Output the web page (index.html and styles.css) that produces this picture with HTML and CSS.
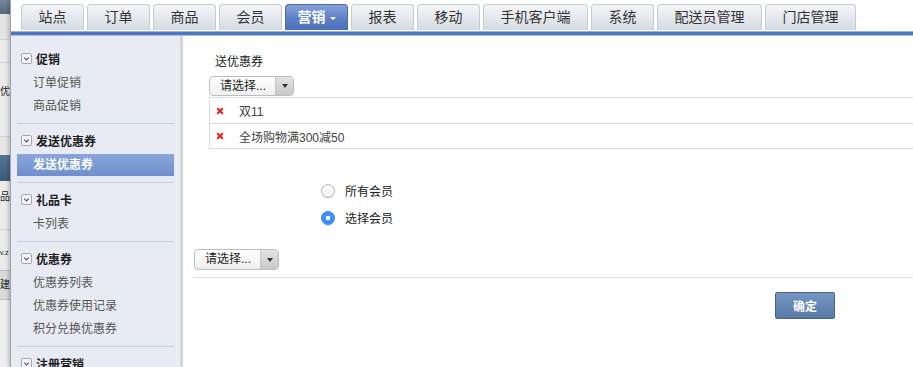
FILE: index.html
```html
<!DOCTYPE html>
<html>
    <head>
        <title>营销 - 发送优惠券</title>
        <link rel="stylesheet" href="styles.css">
    </head>
    <body>
        <div class="desk">
            <div class="desk-title"></div>
            <div class="desk-row r1"></div>
            <div class="desk-row r2"></div>
            <div class="desk-row r3">优</div>
            <div class="desk-row r4"></div>
            <div class="desk-bar"></div>
            <div class="desk-row r5">品</div>
            <div class="desk-row r6">v.z</div>
            <div class="desk-row r7">建</div>
            <div class="desk-rest"></div>
        </div>

        <div class="app">
            <div class="tabbar">
                <div class="tab">站点</div>
                <div class="tab">订单</div>
                <div class="tab">商品</div>
                <div class="tab">会员</div>
                <div class="tab active">营销<span class="caret"></span></div>
                <div class="tab">报表</div>
                <div class="tab">移动</div>
                <div class="tab">手机客户端</div>
                <div class="tab">系统</div>
                <div class="tab">配送员管理</div>
                <div class="tab">门店管理</div>
            </div>
            <div class="band"></div>

            <div class="workspace">
                <div class="sidebar">
                    <div class="group">
                        <div class="head"><svg class="chk" width="11" height="11" viewBox="0 0 11 11"><rect x="0.5" y="0.5" width="10" height="10" rx="1.5" fill="#f4f5f8" stroke="#a3a9b3"/><path d="M3.2 4.6 L5.5 6.9 L7.8 4.6" fill="none" stroke="#50565e" stroke-width="1.1"/></svg>促销</div>
                        <div class="item">订单促销</div>
                        <div class="item">商品促销</div>
                    </div>
                    <div class="group">
                        <div class="head"><svg class="chk" width="11" height="11" viewBox="0 0 11 11"><rect x="0.5" y="0.5" width="10" height="10" rx="1.5" fill="#f4f5f8" stroke="#a3a9b3"/><path d="M3.2 4.6 L5.5 6.9 L7.8 4.6" fill="none" stroke="#50565e" stroke-width="1.1"/></svg>发送优惠券</div>
                        <div class="item current">发送优惠券</div>
                    </div>
                    <div class="group">
                        <div class="head"><svg class="chk" width="11" height="11" viewBox="0 0 11 11"><rect x="0.5" y="0.5" width="10" height="10" rx="1.5" fill="#f4f5f8" stroke="#a3a9b3"/><path d="M3.2 4.6 L5.5 6.9 L7.8 4.6" fill="none" stroke="#50565e" stroke-width="1.1"/></svg>礼品卡</div>
                        <div class="item">卡列表</div>
                    </div>
                    <div class="group">
                        <div class="head"><svg class="chk" width="11" height="11" viewBox="0 0 11 11"><rect x="0.5" y="0.5" width="10" height="10" rx="1.5" fill="#f4f5f8" stroke="#a3a9b3"/><path d="M3.2 4.6 L5.5 6.9 L7.8 4.6" fill="none" stroke="#50565e" stroke-width="1.1"/></svg>优惠券</div>
                        <div class="item">优惠券列表</div>
                        <div class="item">优惠券使用记录</div>
                        <div class="item">积分兑换优惠券</div>
                    </div>
                    <div class="group">
                        <div class="head"><svg class="chk" width="11" height="11" viewBox="0 0 11 11"><rect x="0.5" y="0.5" width="10" height="10" rx="1.5" fill="#f4f5f8" stroke="#a3a9b3"/><path d="M3.2 4.6 L5.5 6.9 L7.8 4.6" fill="none" stroke="#50565e" stroke-width="1.1"/></svg>注册营销</div>
                    </div>
                </div>

                <div class="main">
                    <div class="coupon">
                        <div class="label">送优惠券</div>
                        <div class="select"><span class="sel-text">请选择...</span><span class="sel-arrow"><i></i></span></div>
                        <div class="list">
                            <div class="row"><svg class="del" width="8" height="8" viewBox="0 0 8 8"><path d="M1.2 1.2 L6.8 6.8 M6.8 1.2 L1.2 6.8" stroke="#e2231a" stroke-width="2"/></svg><span>双11</span></div>
                            <div class="row"><svg class="del" width="8" height="8" viewBox="0 0 8 8"><path d="M1.2 1.2 L6.8 6.8 M6.8 1.2 L1.2 6.8" stroke="#e2231a" stroke-width="2"/></svg><span>全场购物满300减50</span></div>
                        </div>
                    </div>

                    <div class="members">
                        <div class="opt"><span class="radio"></span>所有会员</div>
                        <div class="opt"><span class="radio on"></span>选择会员</div>
                    </div>

                    <div class="picker">
                        <div class="select tall"><span class="sel-text">请选择...</span><span class="sel-arrow"><i></i></span></div>
                    </div>
                    <div class="rule"></div>
                    <div class="actions">
                        <button class="btn">确定</button>
                    </div>
                </div>
            </div>
        </div>
    </body>
</html>
```

FILE: styles.css
```css
*{
    box-sizing:border-box;
}
body{
    margin:0;
    height:367px;
    overflow:hidden;
    display:flex;
    background:#fff;
    font-family:"Liberation Sans","Noto Sans CJK SC",sans-serif;
    font-size:12px;
    color:#333;
}

/* window behind, left edge */
.desk{
    width:10px;
    flex:none;
    display:flex;
    flex-direction:column;
    overflow:hidden;
    background:#e9e9e9;
    color:#222;
    font-size:10px;
    white-space:nowrap;
}
.desk-title{
    height:14px;
    background:linear-gradient(#75879b,#56687c);
}
.desk-row{
    border-bottom:1px solid #d0d0d0;
    line-height:16px;
}
.r1{height:26px;background:#e4e4e4;}
.r2{height:23px;background:#ececec;}
.r3{height:74px;padding-top:21px;background:#ebebeb;}
.r4{height:18px;background:#e6e6e6;border-bottom:none;}
.desk-bar{
    height:26px;
    background:linear-gradient(#557593,#3b5b7c);
}
.r5{height:49px;padding-top:8px;background:#ececec;}
.r6{height:40px;padding-top:15px;font-size:7px;background:#ebebeb;border-bottom:none;}
.r7{height:30px;line-height:28px;background:#d9d9d9;border-top:1px solid #bdbdbd;border-bottom:1px solid #bdbdbd;}
.desk-rest{
    flex:1;
    background:#eeeeee;
}

.app{
    flex:1;
    min-width:0;
    display:flex;
    flex-direction:column;
    border-left:1px solid #9ea4ab;
    box-shadow:-2px 0 3px rgba(0,0,0,.18);
}

/* top tabs */
.tabbar{
    height:31px;
    padding:4px 0 0 10px;
    display:flex;
    gap:3px;
    white-space:nowrap;
}
.tab{
    height:26px;
    padding:0 16.5px;
    border:1px solid #c6cbd3;
    border-bottom:none;
    border-radius:4px 4px 0 0;
    background:linear-gradient(#f4f5f8,#e4e7ed 55%,#d5dae2);
    font-size:14px;
    line-height:25px;
    color:#333;
}
.tab.active{
    padding:0 11.5px;
    border-color:#4d6db0;
    background:linear-gradient(#86a2da,#5d80c6 55%,#4b6fb9);
    color:#fff;
    font-weight:bold;
}
.caret{
    display:inline-block;
    margin-left:4px;
    vertical-align:middle;
    border-left:3px solid transparent;
    border-right:3px solid transparent;
    border-top:3px solid #fff;
}
.band{
    height:5px;
    flex:none;
    background:linear-gradient(#9cb2de 0 1px,#5176c1 1px 4px,#aabde3 4px);
}

.workspace{
    flex:1;
    display:flex;
    min-height:0;
}

/* left menu */
.sidebar{
    width:172px;
    flex:none;
    padding-top:6px;
    background:#e8ebf3;
    border-right:3px solid #d3d5da;
    overflow:hidden;
}
.group{
    margin:0 6px;
    padding:5px 0 6px;
    border-bottom:1px solid #c4cfe3;
}
.head{
    display:flex;
    align-items:center;
    height:22px;
    padding-left:4px;
    margin-bottom:3px;
    font-weight:bold;
    color:#1e1e1e;
}
.chk{
    margin-right:4px;
    flex:none;
}
.item{
    height:22px;
    line-height:22px;
    margin-top:1px;
    padding-left:16px;
    color:#555;
}
.item.current{
    background:linear-gradient(#8aa6dc,#6f8fcc);
    color:#fff;
    font-weight:bold;
}

/* content */
.main{
    flex:1;
    min-width:0;
    padding-top:17px;
}
.coupon{
    padding-left:26px;
}
.label{
    padding-left:6px;
    line-height:18px;
    margin-bottom:5px;
    color:#222;
}
.select{
    display:flex;
    width:85px;
    height:20px;
    border:1px solid #bdbdbd;
    border-radius:4px;
    overflow:hidden;
    background:linear-gradient(#ffffff,#f0f0f0);
}
.select.tall{
    height:21px;
}
.sel-text{
    flex:1;
    padding-left:10px;
    line-height:18px;
    color:#222;
}
.select.tall .sel-text{
    line-height:19px;
}
.sel-arrow{
    width:18px;
    display:flex;
    align-items:center;
    justify-content:center;
    border-left:1px solid #c4c4c4;
    background:linear-gradient(#e3e3e3,#c9c9c9);
}
.sel-arrow i{
    border-left:3.5px solid transparent;
    border-right:3.5px solid transparent;
    border-top:4px solid #333;
}
.list{
    margin-top:1px;
    border-left:1px solid #dddddd;
}
.row{
    height:26px;
    display:flex;
    align-items:center;
    padding-left:6px;
    border-top:1px solid #dddddd;
    color:#444;
}
.row:last-child{
    border-bottom:1px solid #dddddd;
}
.del{
    flex:none;
    margin-right:15px;
}

.members{
    padding:28px 0 0 138px;
}
.opt{
    height:27px;
    display:flex;
    align-items:center;
    color:#222;
}
.radio{
    width:14px;
    height:14px;
    margin-right:10px;
    border-radius:50%;
    border:1px solid #b3b3b3;
    background:linear-gradient(#ffffff,#f1f1f1);
    box-shadow:0 1px 1px rgba(0,0,0,.08);
}
.radio.on{
    border-color:#3183ea;
    background:radial-gradient(circle,#fff 0 2px,#3b92f4 2.6px);
}

.picker{
    margin-top:18px;
    padding-left:11px;
}
.rule{
    margin:7px 0 0 11px;
    border-top:1px solid #dddddd;
}
.actions{
    padding:14px 0 0 592px;
}
.btn{
    width:60px;
    height:27px;
    padding:0;
    border:1px solid #4a6288;
    border-radius:2px;
    background:linear-gradient(#7496c2,#5a79a6);
    color:#fff;
    font-family:"Liberation Sans","Noto Sans CJK SC",sans-serif;
    font-size:12px;
    font-weight:bold;
}
```
